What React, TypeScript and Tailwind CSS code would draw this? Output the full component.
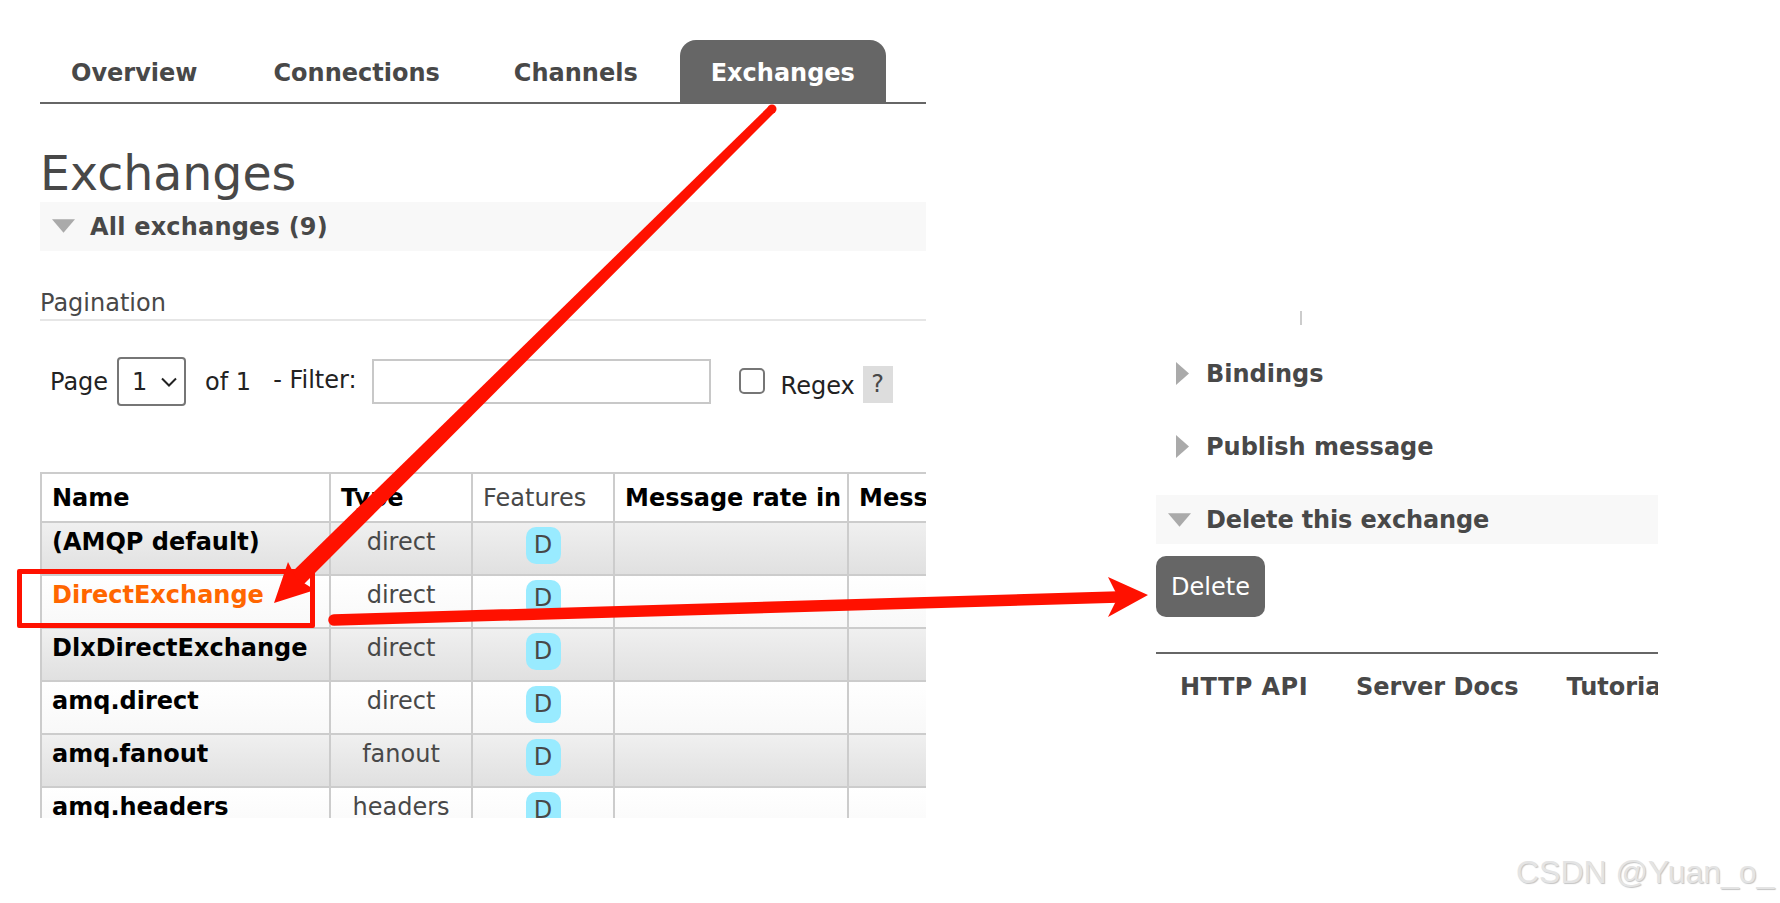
import React from "react";

const rows = [
  { name: "(AMQP default)", type: "direct" },
  { name: "DirectExchange", type: "direct", hot: true },
  { name: "DlxDirectExchange", type: "direct" },
  { name: "amq.direct", type: "direct" },
  { name: "amq.fanout", type: "fanout" },
  { name: "amq.headers", type: "headers" },
];

const tabs = [
  { t: "Overview", c: "pl-[31px] pr-[33px] font-bold text-[#484848] leading-[66px]" },
  { t: "Connections", c: "px-[31px] font-bold text-[#484848] leading-[66px]" },
  { t: "Channels", c: "pl-[31px] pr-[30px] font-bold text-[#484848] leading-[66px]" },
  { t: "Exchanges", c: "px-[31px] h-[64px] leading-[66px] font-bold rounded-t-[16px] bg-[#666666] text-white" },
];

function Down({ className }: { className: string }) {
  return (
    <svg viewBox="0 0 24 14" className={className}>
      <polygon points="0,0 24,0 12,14" fill="#aaaaaa" />
    </svg>
  );
}
function Right() {
  return (
    <svg viewBox="0 0 13 23" className="w-[13px] h-[23px] shrink-0 -mt-[2px]">
      <polygon points="0,0 13,11.5 0,23" fill="#aaaaaa" />
    </svg>
  );
}

export default function App() {
  return (
    <div className="relative w-[1780px] h-[903px] overflow-hidden bg-white flex font-['DejaVu_Sans',sans-serif] text-[24px] text-[#484848]">
      {/* Left panel */}
      <div className="ml-[40px] w-[886px] h-[818px] pt-[40px] overflow-hidden shrink-0">
        <div className="flex gap-[12px] h-[64px] border-b-2 border-[#666666]">
          {tabs.map(({ t, c }) => (
            <div key={t} className={c}>
              {t}
            </div>
          ))}
        </div>
        <h1 className="text-[47.4px] leading-[56px] mt-[42px] h-[56px] font-normal text-[#484848]">Exchanges</h1>
        <div className="h-[49px] bg-[#f8f8f8] flex items-center pl-[12px] gap-[15px] font-bold leading-[51px] tracking-[0.2px]">
          <Down className="w-[23px] h-[14px] -mt-[2px]" />
          <span className="mt-[1px]">All exchanges (9)</span>
        </div>
        <div className="mt-[36px] h-[34px] leading-[32px] border-b-2 border-[#e6e6e6] text-[#484848]">Pagination</div>
        <div className="flex mt-[36px] h-[80px] text-black">
          <span className="ml-[10px] mt-[4px] leading-[42px] text-[#222222]">Page</span>
          <div className="ml-[9px] w-[69px] h-[49px] border-2 border-[#767676] rounded-[4px] flex items-center pl-[13px] gap-[14px] text-[#222222]">
            <span>1</span>
            <svg viewBox="0 0 16 10" className="w-[16px] h-[10px]">
              <path d="M1 1.5 L8 8.5 L15 1.5" fill="none" stroke="#222222" strokeWidth="2" />
            </svg>
          </div>
          <span className="ml-[19px] mt-[4px] leading-[42px] text-[#222222]">of 1</span>
          <span className="ml-[22px] mt-[2px] leading-[42px] text-[#222222]">- Filter:</span>
          <div className="ml-[15px] mt-[2px] w-[339px] h-[45px] border-2 border-[#c8c8c8] bg-white" />
          <div className="ml-[28px] mt-[11px] w-[26px] h-[26px] border-2 border-[#767676] rounded-[5px] bg-white" />
          <span className="ml-[16px] mt-[8px] leading-[42px] text-[#222222]">Regex</span>
          <span className="ml-[8px] mt-[9px] w-[30px] h-[37px] bg-[#dddddd] text-center leading-[37px] text-[#484848]">?</span>
        </div>
        <div className="mt-[35px] w-[1000px]">
          <table className="w-[1000px] table-fixed border-collapse border-2 border-[#cccccc]">
            <colgroup>
              <col className="w-[289px]" />
              <col className="w-[142px]" />
              <col className="w-[142px]" />
              <col className="w-[234px]" />
              <col className="w-[193px]" />
            </colgroup>
            <thead>
              <tr className="h-[49px] bg-white text-black">
                <th className="border-2 border-[#cccccc] text-left font-bold pl-[10px]">Name</th>
                <th className="border-2 border-[#cccccc] text-left font-bold pl-[10px]">Type</th>
                <th className="border-2 border-[#cccccc] text-left font-normal pl-[10px] text-[#484848]">Features</th>
                <th className="border-2 border-[#cccccc] text-left font-bold pl-[10px] whitespace-nowrap">Message rate in</th>
                <th className="border-2 border-[#cccccc] text-left font-bold pl-[10px] whitespace-nowrap">Message</th>
              </tr>
            </thead>
            <tbody>
              {rows.map((r, i) => (
                <tr
                  key={r.name}
                  className={
                    i % 2 === 0
                      ? "h-[53px] bg-gradient-to-b from-[#f0f0f0] to-[#e0e0e0]"
                      : "h-[53px] bg-gradient-to-b from-[#ffffff] to-[#f8f8f8]"
                  }
                >
                  <td
                    className={
                      r.hot
                        ? "border-2 border-[#cccccc] align-top pl-[10px] pt-[4px] leading-[30px] font-bold text-[#ff6600] whitespace-nowrap"
                        : "border-2 border-[#cccccc] align-top pl-[10px] pt-[4px] leading-[30px] font-bold text-black whitespace-nowrap"
                    }
                  >
                    {r.name}
                  </td>
                  <td className="border-2 border-[#cccccc] align-top pt-[4px] leading-[30px] text-center text-[#484848]">{r.type}</td>
                  <td className="border-2 border-[#cccccc] align-top pt-[4px] text-center">
                    <span className="inline-block w-[35px] h-[37px] rounded-[10px] bg-[#99ebff] leading-[37px] text-[#484848]">D</span>
                  </td>
                  <td className="border-2 border-[#cccccc]" />
                  <td className="border-2 border-[#cccccc]" />
                </tr>
              ))}
            </tbody>
          </table>
        </div>
      </div>

      {/* Right panel */}
      <div className="ml-[230px] w-[504px] h-[740px] overflow-hidden pt-[311px] shrink-0 font-bold">
        <div className="ml-[144px] w-[2px] h-[14px] bg-[#cccccc]" />
        <div className="mt-[37px] h-[24px] flex items-center pl-[20px] gap-[17px]">
          <Right />
          <span>Bindings</span>
        </div>
        <div className="mt-[49px] h-[24px] flex items-center pl-[20px] gap-[17px]">
          <Right />
          <span>Publish message</span>
        </div>
        <div className="mt-[36px] h-[49px] bg-[#f8f8f8] flex items-center pl-[12px] gap-[15px] w-[502px]">
          <Down className="w-[23px] h-[14px]" />
          <span className="tracking-[-0.15px]">Delete this exchange</span>
        </div>
        <div className="mt-[12px] w-[109px] h-[61px] rounded-[10px] bg-[#666666] text-white font-normal flex items-center justify-center">
          Delete
        </div>
        <div className="mt-[35px] w-[502px] overflow-hidden border-t-2 border-[#666666] h-[60px] flex pl-[24px] gap-[48px] pt-[19px] leading-[28px] whitespace-nowrap">
          <span className="tracking-[0.45px]">HTTP API</span>
          <span>Server Docs</span>
          <span>Tutorials</span>
        </div>
      </div>

      {/* Annotations */}
      <div className="absolute left-[17px] top-[569px] w-[298px] h-[59px] border-[5px] border-[#ff1100] rounded-[2px]" />
      <svg className="absolute left-0 top-0 w-[1780px] h-[903px] pointer-events-none" viewBox="0 0 1780 903">
        <polygon points="769,106 775,112 302,586 290,574" fill="#ff1100" />
        <circle cx="772" cy="109" r="4.5" fill="#ff1100" />
        <polygon points="274,603 288,562 296,578 315,590" fill="#ff1100" />
        <line x1="334" y1="620" x2="1118" y2="597" stroke="#ff1100" strokeWidth="11.5" strokeLinecap="round" />
        <polygon points="1148,595 1108,577 1118,597 1108,617" fill="#ff1100" />
      </svg>

      <div className="absolute left-[1516px] top-[852px] text-[32px] leading-[40px] whitespace-nowrap font-['Liberation_Sans',sans-serif] text-[#e4e4e4] [text-shadow:1px_1px_1px_#c4c4c4]">
        CSDN @Yuan_o_
      </div>
    </div>
  );
}
